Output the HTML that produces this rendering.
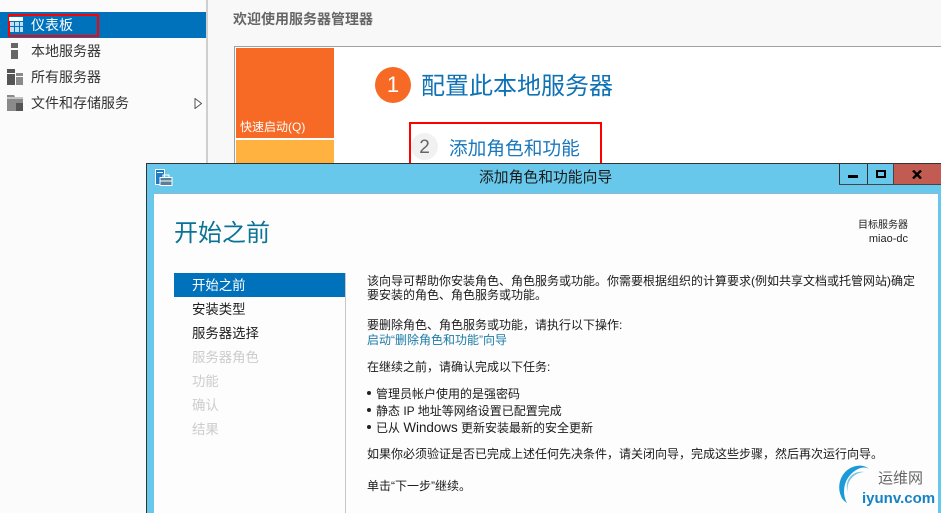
<!DOCTYPE html>
<html lang="zh-CN"><head><meta charset="utf-8"><title>添加角色和功能向导</title>
<style>
html,body{margin:0;padding:0;width:941px;height:513px;overflow:hidden;background:#f8f8f8}
body{position:relative;font-family:"Liberation Sans","Noto Sans CJK SC",sans-serif;color:#1e1e1e}
div,a{position:absolute;white-space:nowrap}
.b{background:#000}
.nav{left:31px;font-size:14px;line-height:18px;color:#333}
.step{left:192px;font-size:13.4px;line-height:18px}
.t{left:367px;font-size:12px;line-height:16px;color:#1a1a1a}
.dot{left:367px;width:4px;height:4px;border-radius:50%;background:#222}
</style></head><body>
<div style="left:0;top:0;width:206px;height:513px;background:#fbfbfb"></div>
<div style="left:206px;top:0;width:2px;height:513px;background:#cfcfcf"></div>
<div style="left:0;top:12px;width:206px;height:26px;background:#0072bc"></div>
<div style="left:8px;top:14px;width:87px;height:19px;border:2px solid #f00"></div>
<svg style="position:absolute;left:0;top:0" width="30" height="115">
<rect x="9" y="17" width="14" height="4" fill="#fff"/>
<rect x="10" y="22" width="4" height="4" fill="#bfe0f5"/><rect x="15" y="22" width="4" height="4" fill="#bfe0f5"/><rect x="20" y="22" width="3" height="4" fill="#bfe0f5"/>
<rect x="10" y="27" width="4" height="5" fill="#bfe0f5"/><rect x="15" y="27" width="4" height="5" fill="#bfe0f5"/><rect x="20" y="27" width="3" height="5" fill="#bfe0f5"/>
<rect x="11" y="43" width="7" height="5" fill="#666"/><rect x="11" y="50" width="7" height="9" fill="#666"/>
<rect x="7" y="69" width="8" height="4" fill="#555"/><rect x="7" y="74" width="8" height="11" fill="#555"/><rect x="16" y="73" width="7" height="3" fill="#8a8a8a"/><rect x="16" y="77" width="7" height="8" fill="#8a8a8a"/>
<path d="M7 95h7l1 2h8v14H7z" fill="#8a8a8a"/><path d="M16 103h7v8h-7z" fill="#555"/><path d="M7 98h16" stroke="#fff" stroke-width="1"/>
</svg>
<div class="nav" style="top:16px;color:#fff">仪表板</div>
<div class="nav" style="top:42px">本地服务器</div>
<div class="nav" style="top:68px">所有服务器</div>
<div class="nav" style="top:94px">文件和存储服务</div>
<svg style="position:absolute;left:194px;top:98px" width="9" height="11"><path d="M1 .5L7.5 5.5 1 10.5z" fill="#fff" stroke="#555"/></svg>

<div style="left:233px;top:11px;font-size:14px;line-height:17px;font-weight:bold;color:#666">欢迎使用服务器管理器</div>
<div style="left:234px;top:46px;width:707px;height:120px;background:#fff;box-shadow:inset 1px 1px 0 #a0a0a0"></div>
<div style="left:236px;top:48px;width:98px;height:90px;background:#f66a25"></div>
<div style="left:236px;top:140px;width:98px;height:24px;background:#ffb240"></div>
<div style="left:240px;top:119px;font-size:12px;line-height:16px;color:#fff">快速启动(Q)</div>
<div style="left:375px;top:67px;width:36px;height:36px;border-radius:50%;background:#f66a25;color:#fff;font-size:22px;line-height:36px;text-align:center">1</div>
<div style="left:421px;top:71px;font-size:24px;line-height:32px;color:#0f72b5">配置此本地服务器</div>
<div style="left:411px;top:133px;width:27px;height:27px;border-radius:50%;background:#f1f1f1;color:#666;font-size:19px;line-height:29px;text-align:center">2</div>
<div style="left:449px;top:136px;font-size:18.7px;line-height:26px;color:#1a78bd">添加角色和功能</div>
<div style="left:409px;top:122px;width:189px;height:39px;border:2px solid #f00"></div>

<div style="left:146px;top:163px;width:795px;height:350px;background:#67c8ec;box-sizing:border-box;border-left:1px solid #333;border-top:1px solid #333"></div>
<div style="left:154px;top:194px;width:784px;height:319px;background:#fdfdfd;box-shadow:0 -1px 0 #8fb8d0"></div>
<svg style="position:absolute;left:155px;top:169px" width="18" height="18">
<rect x=".5" y=".5" width="9" height="15" fill="#1f7cc4" stroke="#fff"/><rect x="2" y="3" width="6" height="1" fill="#fff"/>
<path d="M5 8.5h12v8H5z" fill="#5a7f9a" stroke="#fff"/><path d="M8 8V6h6v2" fill="none" stroke="#fff"/><path d="M5 12h12" stroke="#fff"/>
</svg>
<div style="left:479px;top:169px;font-size:14.8px;line-height:18px;color:#1a1a1a">添加角色和功能向导</div>
<div style="left:839px;top:163px;width:102px;height:21px;background:#c25c52"></div>
<div style="left:839px;top:163px;width:54px;height:21px;background:#67c8ec"></div>
<div style="left:839px;top:163px;width:102px;height:1px;background:#333"></div>
<div style="left:839px;top:163px;width:1px;height:21px;background:#333"></div>
<div style="left:867px;top:163px;width:1px;height:21px;background:#333"></div>
<div style="left:893px;top:163px;width:1px;height:21px;background:#444"></div>
<div style="left:839px;top:184px;width:102px;height:1px;background:#444"></div>
<div class="b" style="left:848px;top:175px;width:10px;height:3px"></div>
<div style="left:876px;top:170px;width:6px;height:4px;border:2px solid #000"></div>
<svg style="position:absolute;left:912px;top:170px" width="10" height="9"><path d="M1 .5l8 8M9 .5l-8 8" stroke="#000" stroke-width="2.4"/></svg>

<div style="left:174px;top:219px;font-size:24px;line-height:30px;color:#0a7396">开始之前</div>
<div style="right:33px;top:219px;font-size:10px;line-height:13px;color:#222;text-align:right">目标服务器</div>
<div style="right:33px;top:233px;font-size:11px;line-height:13px;color:#222;text-align:right">miao-dc</div>
<div style="left:174px;top:273px;width:171px;height:24px;background:#0072bc"></div>
<div style="left:345px;top:273px;width:1px;height:240px;background:#c8c8c8"></div>
<div class="step" style="top:277px;color:#fff">开始之前</div>
<div class="step" style="top:301px">安装类型</div>
<div class="step" style="top:325px">服务器选择</div>
<div class="step" style="top:349px;color:#ccc">服务器角色</div>
<div class="step" style="top:373px;color:#ccc">功能</div>
<div class="step" style="top:397px;color:#ccc">确认</div>
<div class="step" style="top:421px;color:#ccc">结果</div>

<div class="t" style="top:273px">该向导可帮助你安装角色、角色服务或功能。你需要根据组织的计算要求(例如共享文档或托管网站)确定</div>
<div class="t" style="top:287px">要安装的角色、角色服务或功能。</div>
<div class="t" style="top:317px">要删除角色、角色服务或功能，请执行以下操作:</div>
<div class="t" style="top:332px;color:#1a7ba6">启动“删除角色和功能”向导</div>
<div class="t" style="top:359px">在继续之前，请确认完成以下任务:</div>
<div class="dot" style="top:391px"></div><div class="t" style="left:376px;top:386px">管理员帐户使用的是强密码</div>
<div class="dot" style="top:408px"></div><div class="t" style="left:376px;top:403px">静态 IP 地址等网络设置已配置完成</div>
<div class="dot" style="top:425px"></div><div class="t" style="left:376px;top:420px">已从 <span style="font-size:13.4px">Windows</span> 更新安装最新的安全更新</div>
<div class="t" style="top:446px">如果你必须验证是否已完成上述任何先决条件，请关闭向导，完成这些步骤，然后再次运行向导。</div>
<div class="t" style="top:478px">单击“下一步”继续。</div>

<svg style="position:absolute;left:836px;top:464px" width="50" height="44"><path d="M20 2C6 5 0 20 5 32c1 3 3 5 6 7C5 28 8 12 22 5c4-2 8-2 11 0-3-3-8-4-13-3z" fill="#1a9ad6"/><path d="M28 8C17 9 10 18 12 28c-4-10 3-22 16-20z" fill="#7cc4e8"/></svg>
<div style="left:878px;top:470px;font-size:15px;line-height:18px;color:#666">运维网</div>
<div style="left:862px;top:490px;font-size:15px;line-height:17px;font-weight:bold;color:#1482c4">iyunv.com</div>
</body></html>
